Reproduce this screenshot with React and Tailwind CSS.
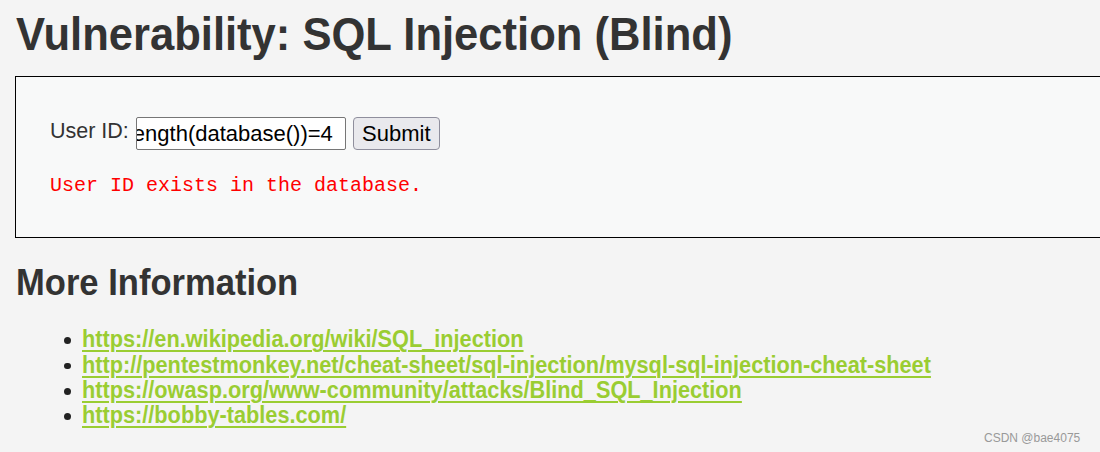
export default function App() {
  const links = [
    "https://en.wikipedia.org/wiki/SQL_injection",
    "http://pentestmonkey.net/cheat-sheet/sql-injection/mysql-sql-injection-cheat-sheet",
    "https://owasp.org/www-community/attacks/Blind_SQL_Injection",
    "https://bobby-tables.com/",
  ];
  return (
    <div className="relative h-[452px] w-[1100px] overflow-hidden bg-[#f4f4f4] pl-[16px] font-['Liberation_Sans',Arial,sans-serif] text-[#333]">
      <h1 className="mt-[11px] origin-left scale-x-[0.947] whitespace-nowrap text-[46px] font-bold leading-[46px] text-[#333]">
        Vulnerability: SQL Injection (Blind)
      </h1>
      <div className="-ml-[1px] mt-[19px] w-[1200px] border border-black bg-[#f8f9f9] pb-[38.5px] pl-[34px] pt-[40px]">
        <div className="flex items-start">
          <span className="mt-[2px] text-[21.5px] leading-[24px] text-[#333]">User ID:</span>
          <div className="ml-[7px] flex h-[33px] w-[210px] items-center justify-end overflow-hidden whitespace-nowrap rounded-[2px] border border-[#767676] bg-white pr-[12px] text-[22px] text-black">
            <span>1' and length(database())=4</span>
          </div>
          <div className="ml-[7px] flex h-[33px] w-[87px] items-center justify-center rounded-[4px] border border-[#8f8f9d] bg-[#e9e9ed] text-[22px] text-black">
            Submit
          </div>
        </div>
        <p className="mt-[24px] font-['Liberation_Mono',monospace] text-[20px] leading-[24px] text-[#ff0000]">
          User ID exists in the database.
        </p>
      </div>
      <h2 className="mt-[27.5px] origin-left scale-x-[0.96] whitespace-nowrap text-[36px] font-bold leading-[36px] text-[#333]">
        More Information
      </h2>
      <ul className="mt-[26.4px]">
        {links.map((l) => (
          <li key={l} className="flex h-[25.33px] items-start">
            <span className="ml-[48px] mt-[10px] h-[6.5px] w-[6.5px] shrink-0 rounded-full bg-[#222]" />
            <a className="ml-[11px] inline-block origin-left scale-x-[0.944] whitespace-nowrap text-[23px] font-bold leading-[25.33px] text-[#9acd32] underline decoration-[2px] underline-offset-[3px]">
              {l}
            </a>
          </li>
        ))}
      </ul>
      <div className="absolute left-[984px] top-[431px] font-['Liberation_Sans',Arial,sans-serif] text-[12px] leading-[14px] text-[#999]">
        CSDN @bae4075
      </div>
    </div>
  );
}
